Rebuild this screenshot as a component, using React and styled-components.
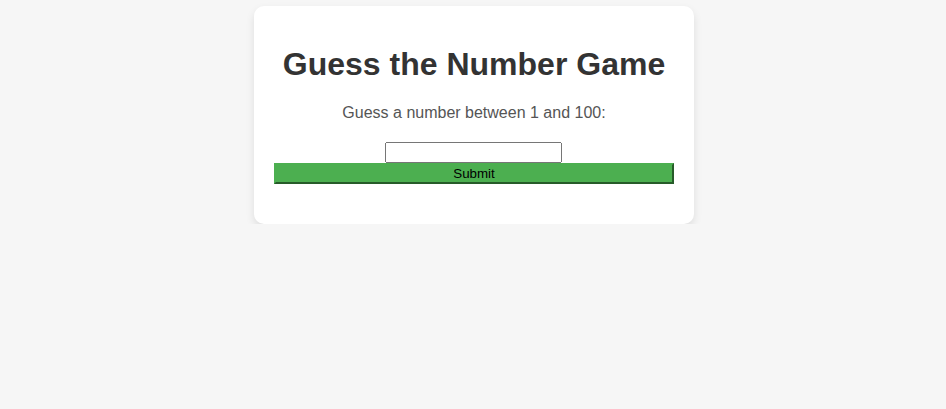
import React, { useState } from "react";
import styled, { createGlobalStyle } from "styled-components";

const GlobalStyle = createGlobalStyle`
  body {
    margin: 0;
    padding: 6px 0 0 2px;
    background-color: #f6f6f6;
    font-family: "Liberation Sans", Arial, sans-serif;
  }
`;

const Card = styled.div`
  width: 400px;
  margin: 0 auto;
  padding: 20px 20px 40px;
  background-color: #fff;
  border-radius: 10px;
  box-shadow: 0 4px 8px rgba(0, 0, 0, 0.1);
  text-align: center;
`;

const Title = styled.h1`
  margin: 20px 0 21px;
  font-size: 32px;
  color: #333;
`;

const Prompt = styled.p`
  margin: 16px 0 20px;
  font-size: 16px;
  color: #555;
`;

const Form = styled.form`
  display: flex;
  flex-direction: column;
  align-items: center;
`;

const GuessInput = styled.input`
  box-sizing: border-box;
  width: 177px;
  height: 21px;
  margin: 0 1px 0 0;
  font-family: "Liberation Sans", Arial, sans-serif;
  font-size: 13.33px;
`;

const SubmitButton = styled.button`
  box-sizing: border-box;
  width: 100%;
  height: 21px;
  margin: 0;
  padding: 1px 6px;
  border: 2px outset #4caf50;
  background-color: #4caf50;
  color: #000;
  font-family: "Liberation Sans", Arial, sans-serif;
  font-size: 13.33px;
`;

const App = () => {
  const [guess, setGuess] = useState("");

  return (
    <>
      <GlobalStyle />
      <Card>
        <Title>Guess the Number Game</Title>
        <Prompt>Guess a number between 1 and 100:</Prompt>
        <Form onSubmit={(e) => e.preventDefault()}>
          <GuessInput
            type="number"
            value={guess}
            onChange={(e) => setGuess(e.target.value)}
          />
          <SubmitButton type="submit">Submit</SubmitButton>
        </Form>
      </Card>
    </>
  );
};

export default App;
